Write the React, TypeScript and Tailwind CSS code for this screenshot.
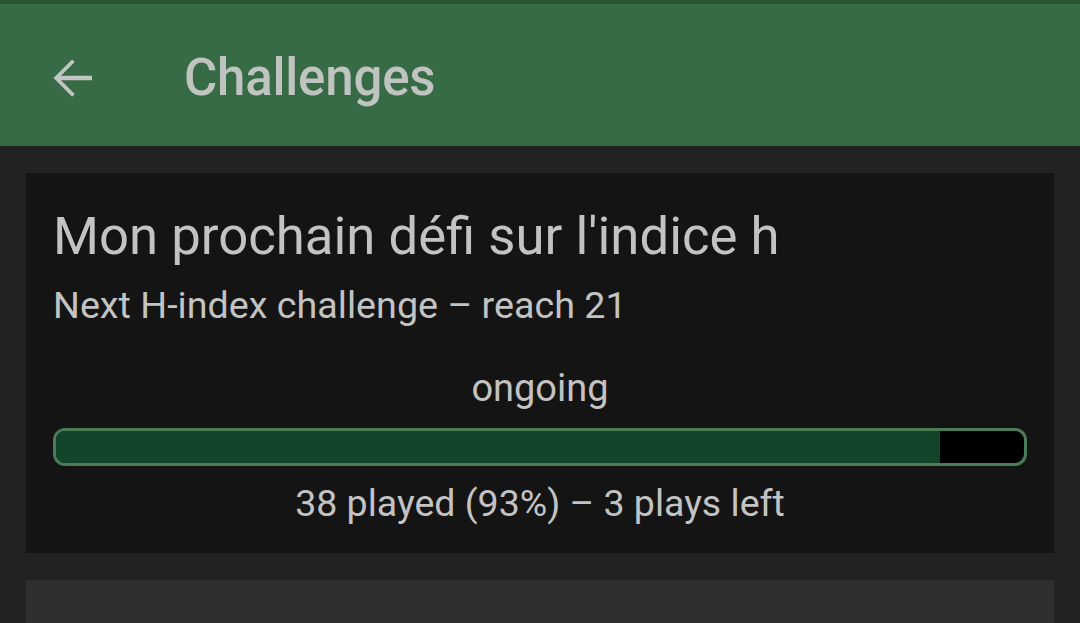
import React from "react";

export default function App() {
  return (
    <div
      className="w-[1080px] h-[623px] overflow-hidden bg-[#222222] flex flex-col"
      style={{ fontFamily: "Roboto, 'Noto Sans', sans-serif" }}
    >
      <div className="h-[4px] bg-[#2a5535] shrink-0" />
      <div className="h-[142px] bg-[#366b46] flex items-center pt-[6px] shrink-0">
        <div className="w-[60px] h-[60px] ml-[42px] flex items-center justify-center">
          <svg width="60" height="60" viewBox="0 0 24 24" fill="#c2c6c2">
            <path d="M20 11.1H7.6l5.5-5.5-1.05-1.05L4.6 12l7.45 7.45 1.05-1.05-5.5-5.5H20z" />
          </svg>
        </div>
        <div className="ml-[82px] text-[51px] leading-[52px] font-medium text-[#c0c4c0] tracking-[-0.2px]">
          Challenges
        </div>
      </div>
      <div className="px-[26px] pt-[27px] flex flex-col gap-[27px] shrink-0">
        <div className="bg-[#141414] pt-[37px] pb-[30px] px-[27px] flex flex-col">
          <div className="text-[52.7px] leading-[53px] text-[#c3c3c3]">
            Mon prochain défi sur l'indice h
          </div>
          <div className="mt-[23px] text-[37.7px] leading-[38px] text-[#c3c3c3]">
            Next H-index challenge – reach 21
          </div>
          <div className="mt-[45px] text-[38px] leading-[38px] text-[#c3c3c3] text-center">
            ongoing
          </div>
          <div className="mt-[21px] h-[38px] rounded-[12px] border-[3px] border-[#4b7c58] bg-black overflow-hidden flex">
            <div className="h-full bg-[#13452a]" style={{ width: "91.3%" }} />
          </div>
          <div className="mt-[19px] text-[37.5px] leading-[37.5px] text-[#c3c3c3] text-center">
            38 played (93%) – 3 plays left
          </div>
        </div>
        <div className="bg-[#2e2e2e] h-[120px]" />
      </div>
    </div>
  );
}
